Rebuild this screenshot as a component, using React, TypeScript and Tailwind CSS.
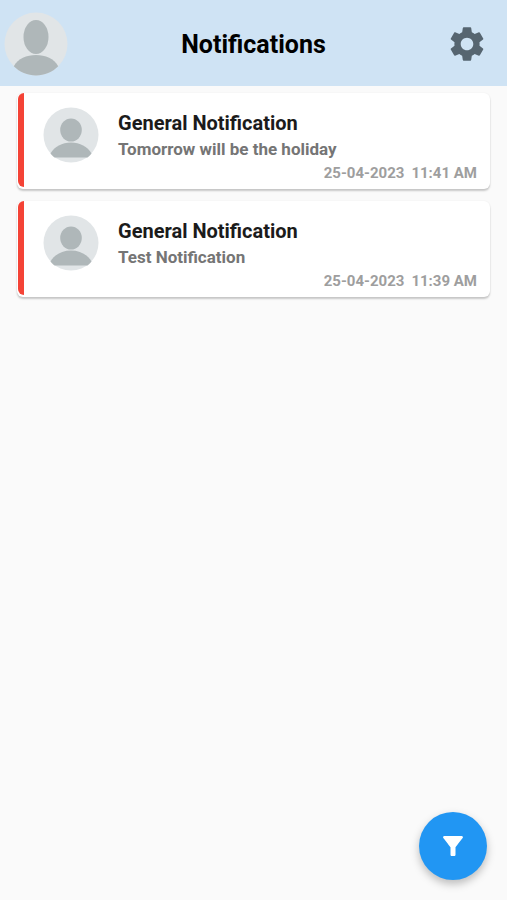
import { MdSettings, MdFilterAlt } from "react-icons/md";

type Notification = {
  id: number;
  title: string;
  message: string;
  date: string;
  time: string;
};

const notifications: Notification[] = [
  { id: 1, title: "General Notification", message: "Tomorrow will be the holiday", date: "25-04-2023", time: "11:41 AM" },
  { id: 2, title: "General Notification", message: "Test Notification", date: "25-04-2023", time: "11:39 AM" },
];

function ProfileAvatar() {
  return (
    <svg viewBox="0 0 64 64" className="size-16" aria-hidden="true">
      <circle cx="32" cy="32" r="31.5" fill="#e1e5e7" />
      <ellipse cx="32" cy="25" rx="12.5" ry="17" fill="#afb7b9" />
      <path d="M9.8 54.3C14 46.5 22.5 43 32 43S50 46.5 54.2 54.3C48.5 60.3 40.5 63.5 32 63.5S15.5 60.3 9.8 54.3Z" fill="#afb7b9" />
    </svg>
  );
}

function SenderAvatar() {
  return (
    <svg viewBox="0 0 56 56" className="size-14 shrink-0" aria-hidden="true">
      <circle cx="28" cy="28" r="27.5" fill="#e1e5e7" />
      <ellipse cx="28" cy="23" rx="10.8" ry="11.5" fill="#afb7b9" />
      <path d="M7.5 46.5C11.5 39.5 19 35.5 28 35.5S44.5 39.5 48.5 46.5Q46.5 49 44.5 50.5H11.5Q9.5 49 7.5 46.5Z" fill="#afb7b9" />
    </svg>
  );
}

function NotificationCard({ item }: { item: Notification }) {
  return (
    <li className="flex h-24 rounded-md bg-white pl-px shadow-[0_2px_2px_rgba(0,0,0,0.2),0_0_2px_rgba(0,0,0,0.06)]">
      <div className="mb-0.5 w-1.5 shrink-0 rounded-l-md bg-[#f44336]" />
      <div className="flex grow items-start pt-3.5 pr-[13px] pl-[19px]">
        <SenderAvatar />
        <div className="flex grow flex-col pl-[19px]">
          <h2 className="text-xl leading-8 font-bold text-[#1b1b1b]">{item.title}</h2>
          <p className="text-[17px] leading-5 font-bold text-[#757575]">{item.message}</p>
          <p className="flex justify-end gap-[7px] text-[15px] leading-7 font-bold text-[#9e9e9e]">
            <span>{item.date}</span>
            <span>{item.time}</span>
          </p>
        </div>
      </div>
    </li>
  );
}

export default function App() {
  return (
    <div className="flex min-h-screen flex-col bg-[#fafafa] font-['Roboto',sans-serif]">
      <header className="grid h-[86px] grid-cols-[1fr_auto_1fr] items-center bg-[#cfe3f4] px-1 pt-0.5">
        <button type="button" aria-label="Profile" className="justify-self-start">
          <ProfileAvatar />
        </button>
        <h1 className="pt-0.5 text-[25px] font-bold text-black">Notifications</h1>
        <button type="button" aria-label="Settings" className="mr-[15px] justify-self-end text-[#566570]">
          <MdSettings className="size-[42px]" />
        </button>
      </header>
      <main className="grow px-[17px] pt-[7px]">
        <ul className="flex flex-col gap-3">
          {notifications.map((item) => (
            <NotificationCard key={item.id} item={item} />
          ))}
        </ul>
      </main>
      <button
        type="button"
        aria-label="Filter notifications"
        className="fixed right-5 bottom-5 flex size-[68px] items-center justify-center rounded-full bg-[#2196f3] text-white shadow-[0_4px_8px_rgba(0,0,0,0.25)]"
      >
        <MdFilterAlt className="size-[30px]" />
      </button>
    </div>
  );
}
